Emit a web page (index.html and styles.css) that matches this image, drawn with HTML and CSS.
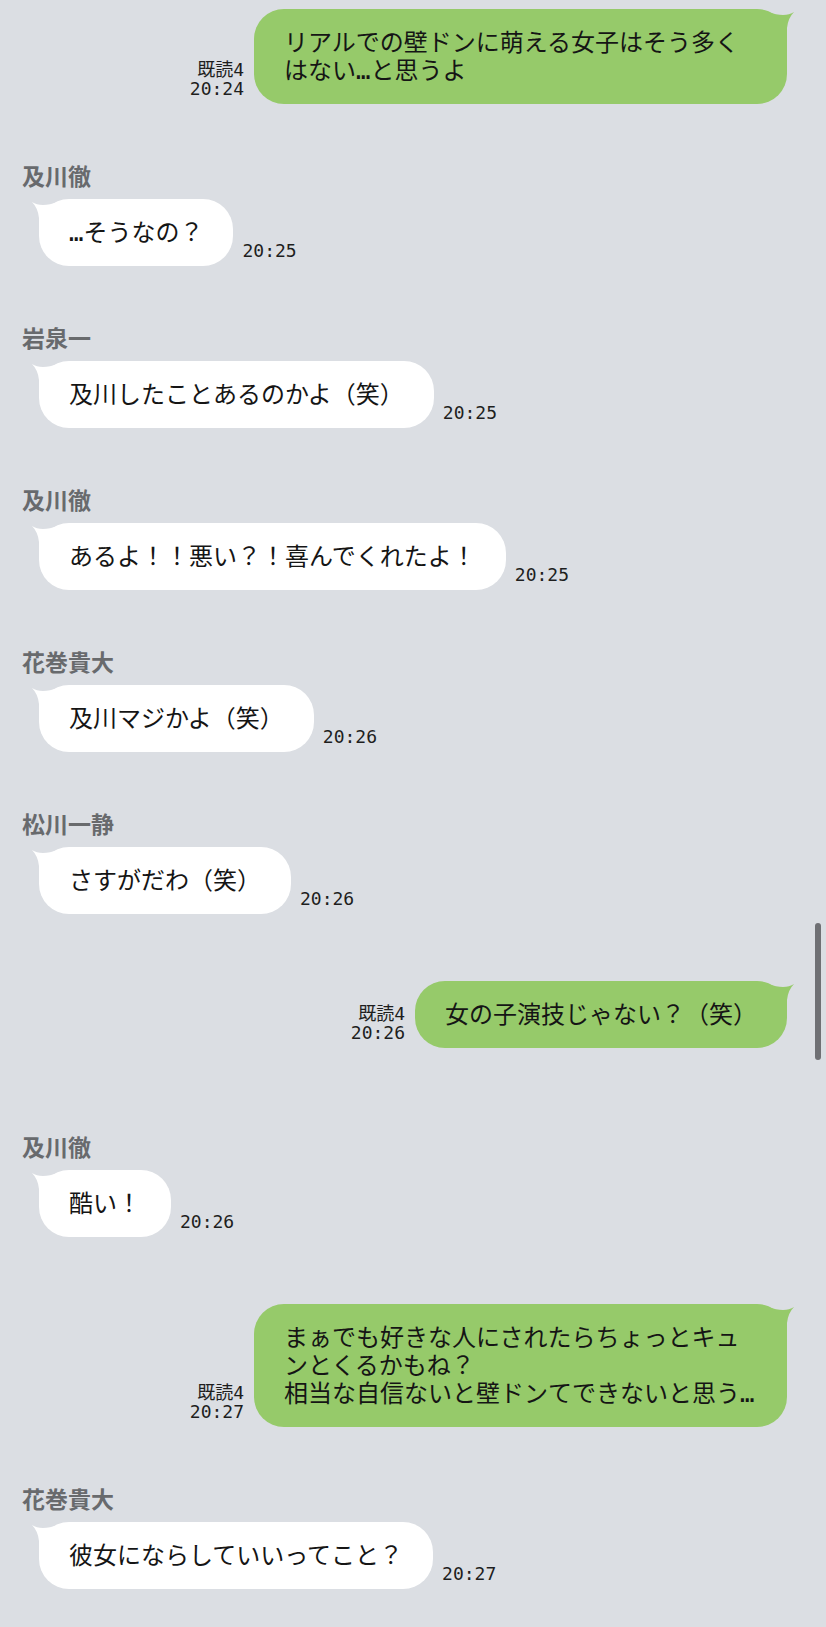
FILE: index.html
```html
<!DOCTYPE html>
<html lang="ja">
<head>
<meta charset="utf-8">
<title>トーク</title>
<link rel="stylesheet" href="styles.css">
</head>
<body>
<div class="chat">
  <div class="row sent">
    <div class="meta"><span>既読4</span><span>20:24</span></div>
    <div class="bubble">リアルでの壁ドンに萌える女子はそう多くはない…と思うよ<svg class="tail" viewBox="0 0 28 34" width="28" height="34"><path d="M1,3 Q10,9 27,3 L27,34 L8,34 L8,19 Q7,9 1,3 Z"/></svg></div>
  </div>

  <div class="group">
    <div class="name">及川徹</div>
    <div class="row recv">
      <div class="bubble">…そうなの？<svg class="tail" viewBox="0 0 28 34" width="28" height="34"><path d="M1,3 Q10,9 27,3 L27,34 L8,34 L8,19 Q7,9 1,3 Z"/></svg></div>
      <div class="meta">20:25</div>
    </div>
  </div>

  <div class="group">
    <div class="name">岩泉一</div>
    <div class="row recv">
      <div class="bubble">及川したことあるのかよ（笑）<svg class="tail" viewBox="0 0 28 34" width="28" height="34"><path d="M1,3 Q10,9 27,3 L27,34 L8,34 L8,19 Q7,9 1,3 Z"/></svg></div>
      <div class="meta">20:25</div>
    </div>
  </div>

  <div class="group">
    <div class="name">及川徹</div>
    <div class="row recv">
      <div class="bubble">あるよ！！悪い？！喜んでくれたよ！<svg class="tail" viewBox="0 0 28 34" width="28" height="34"><path d="M1,3 Q10,9 27,3 L27,34 L8,34 L8,19 Q7,9 1,3 Z"/></svg></div>
      <div class="meta">20:25</div>
    </div>
  </div>

  <div class="group">
    <div class="name">花巻貴大</div>
    <div class="row recv">
      <div class="bubble">及川マジかよ（笑）<svg class="tail" viewBox="0 0 28 34" width="28" height="34"><path d="M1,3 Q10,9 27,3 L27,34 L8,34 L8,19 Q7,9 1,3 Z"/></svg></div>
      <div class="meta">20:26</div>
    </div>
  </div>

  <div class="group">
    <div class="name">松川一静</div>
    <div class="row recv">
      <div class="bubble">さすがだわ（笑）<svg class="tail" viewBox="0 0 28 34" width="28" height="34"><path d="M1,3 Q10,9 27,3 L27,34 L8,34 L8,19 Q7,9 1,3 Z"/></svg></div>
      <div class="meta">20:26</div>
    </div>
  </div>

  <div class="row sent">
    <div class="meta"><span>既読4</span><span>20:26</span></div>
    <div class="bubble">女の子演技じゃない？（笑）<svg class="tail" viewBox="0 0 28 34" width="28" height="34"><path d="M1,3 Q10,9 27,3 L27,34 L8,34 L8,19 Q7,9 1,3 Z"/></svg></div>
  </div>

  <div class="group later">
    <div class="name">及川徹</div>
    <div class="row recv">
      <div class="bubble">酷い！<svg class="tail" viewBox="0 0 28 34" width="28" height="34"><path d="M1,3 Q10,9 27,3 L27,34 L8,34 L8,19 Q7,9 1,3 Z"/></svg></div>
      <div class="meta">20:26</div>
    </div>
  </div>

  <div class="row sent">
    <div class="meta"><span>既読4</span><span>20:27</span></div>
    <div class="bubble">まぁでも好きな人にされたらちょっとキュンとくるかもね？<br>相当な自信ないと壁ドンてできないと思う…<svg class="tail" viewBox="0 0 28 34" width="28" height="34"><path d="M1,3 Q10,9 27,3 L27,34 L8,34 L8,19 Q7,9 1,3 Z"/></svg></div>
  </div>

  <div class="group">
    <div class="name">花巻貴大</div>
    <div class="row recv">
      <div class="bubble">彼女にならしていいってこと？<svg class="tail" viewBox="0 0 28 34" width="28" height="34"><path d="M1,3 Q10,9 27,3 L27,34 L8,34 L8,19 Q7,9 1,3 Z"/></svg></div>
      <div class="meta">20:27</div>
    </div>
  </div>
</div>
<div class="scrollbar"></div>
</body>
</html>
```

FILE: styles.css
```css
html, body {
  margin: 0;
  padding: 0;
}

body {
  background: #dbdee3;
  width: 826px;
  height: 1627px;
  overflow: hidden;
  font-family: "DejaVu Sans Mono", "Noto Sans CJK JP", monospace;
  color: #151515;
}

.chat {
  display: flex;
  flex-direction: column;
  gap: 63px;
  padding: 9px 39px 0 22px;
}

.row {
  display: flex;
  align-items: flex-end;
}

.sent {
  justify-content: flex-end;
}

.group + .sent {
  margin-top: 4px;
}

.later {
  margin-top: 27px;
}

.name {
  font-family: "Noto Sans CJK JP", sans-serif;
  font-weight: 700;
  font-size: 23px;
  line-height: 16px;
  color: #686a6d;
  margin-bottom: 16px;
}

.recv {
  padding-left: 17px;
}

.bubble {
  position: relative;
  font-size: 24px;
  line-height: 28px;
  padding: 19.5px 30px;
  border-radius: 30px;
  max-width: 473px;
  background: #ffffff;
}

.sent .bubble {
  background: #96ca6a;
}

.tail {
  position: absolute;
  top: 0;
  left: -8px;
  fill: #ffffff;
}

.sent .tail {
  left: auto;
  right: -8px;
  transform: scaleX(-1);
  fill: #96ca6a;
}

.meta {
  display: flex;
  flex-direction: column;
  font-size: 18px;
  line-height: 19px;
  color: #1e1e1e;
  padding-bottom: 6px;
}

.sent .meta {
  align-items: flex-end;
  margin-right: 10px;
}

.recv .meta {
  margin-left: 9px;
}

.scrollbar {
  position: fixed;
  top: 923px;
  right: 5px;
  width: 6px;
  height: 137px;
  border-radius: 3px;
  background: #6f7074;
}
```
